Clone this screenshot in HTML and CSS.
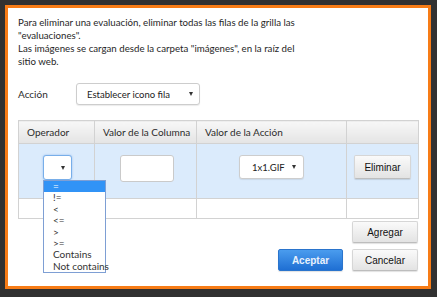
FILE: index.html
```html
<!DOCTYPE html>
<html lang="es">
<head>
    <meta charset="UTF-8">
    <title>Condiciones de fila</title>
    <link rel="stylesheet" href="styles.css">
</head>
<body>
    <div class="backdrop">
        <div class="dialog">
            <p class="note">Para eliminar una evaluación, eliminar todas las filas de la grilla las<br>"evaluaciones".<br>Las imágenes se cargan desde la carpeta "imágenes", en la raíz del<br>sitio web.</p>

            <div class="action-row">
                <span class="label">Acción</span>
                <div class="select select-action"><span>Establecer icono fila</span><i class="caret"></i></div>
            </div>

            <table class="grid">
                <colgroup>
                    <col class="col-op">
                    <col class="col-val">
                    <col class="col-act">
                    <col class="col-btn">
                </colgroup>
                <thead>
                    <tr>
                        <th>Operador</th>
                        <th>Valor de la Columna</th>
                        <th>Valor de la Acción</th>
                        <th></th>
                    </tr>
                </thead>
                <tbody>
                    <tr class="row-current">
                        <td>
                            <div class="dropdown">
                                <div class="select select-op focused"><i class="caret"></i></div>
                                <ul class="options">
                                    <li class="active">=</li>
                                    <li>!=</li>
                                    <li>&lt;</li>
                                    <li>&lt;=</li>
                                    <li>&gt;</li>
                                    <li>&gt;=</li>
                                    <li>Contains</li>
                                    <li>Not contains</li>
                                </ul>
                            </div>
                        </td>
                        <td><input class="value" type="text"></td>
                        <td><div class="select select-gif"><span>1x1.GIF</span><i class="caret"></i></div></td>
                        <td><button class="btn btn-delete">Eliminar</button></td>
                    </tr>
                    <tr class="row-empty">
                        <td></td><td></td><td></td><td></td>
                    </tr>
                </tbody>
            </table>

            <div class="add-row">
                <button class="btn">Agregar</button>
            </div>
            <div class="footer">
                <button class="btn btn-primary">Aceptar</button>
                <button class="btn">Cancelar</button>
            </div>
        </div>
    </div>
</body>
</html>
```

FILE: styles.css
```css
body {
    margin: 0;
    background: #313131;
    font-family: Lato, "Liberation Sans", sans-serif;
    color: #2b2b2b;
}
.backdrop {
    height: 297px;
    padding: 5px 0 0 5px;
    box-sizing: border-box;
}
.dialog {
    box-sizing: border-box;
    width: 426px;
    height: 284px;
    border: 3px solid #f77c16;
    background: #fff;
    padding: 8px 10px 0;
}
.note {
    margin: 0;
    font-size: 9.7px;
    line-height: 13px;
    color: #262626;
}
.action-row {
    display: flex;
    align-items: center;
    margin-top: 15px;
}
.label {
    width: 58px;
    font-size: 10px;
}
.select {
    box-sizing: border-box;
    display: flex;
    align-items: center;
    justify-content: space-between;
    background: #fff;
    border: 1px solid #cdcdcd;
    border-radius: 3px;
    box-shadow: 0 1px 1px rgba(0, 0, 0, 0.08);
    font-size: 9.5px;
    color: #222;
}
.caret {
    width: 0;
    height: 0;
    border-left: 2.5px solid transparent;
    border-right: 2.5px solid transparent;
    border-top: 4px solid #333;
}
.select-action {
    width: 124px;
    height: 22px;
    padding: 0 6px 0 10px;
}
.grid {
    margin-top: 15px;
    width: 400px;
    border-collapse: collapse;
    table-layout: fixed;
}
.col-op { width: 76px; }
.col-val { width: 102px; }
.col-act { width: 150px; }
.col-btn { width: 72px; }
.grid th,
.grid td {
    border: 1px solid #d2d2d2;
    padding: 0;
}
.grid th {
    height: 22px;
    background: linear-gradient(#f7f7f7, #e4e4e4);
    text-align: left;
    padding-left: 8px;
    font-size: 10px;
    font-weight: normal;
    color: #2b2b2b;
}
.row-current td {
    height: 43px;
    background: #dbebfc;
    text-align: center;
    vertical-align: top;
    padding-top: 11px;
}
.row-empty td {
    height: 19px;
}
.dropdown {
    position: relative;
    display: inline-block;
    vertical-align: top;
    margin-left: 2px;
}
.select-op {
    width: 29px;
    height: 25px;
    justify-content: flex-end;
    padding-right: 6px;
}
.focused {
    border-color: #78aee9;
    box-shadow: 0 0 2px rgba(90, 150, 230, 0.6);
}
.options {
    position: absolute;
    left: 0;
    top: 100%;
    margin: 0;
    padding: 0;
    list-style: none;
    width: 63px;
    box-sizing: border-box;
    border: 1px solid #7e9fd4;
    background: #fff;
    text-align: left;
    font-size: 10px;
    z-index: 2;
}
.options li {
    height: 11.4px;
    line-height: 11.4px;
    padding-left: 9px;
    color: #333;
    white-space: nowrap;
}
.options li.active {
    background: #3193f6;
    color: #fff;
}
.value {
    box-sizing: border-box;
    width: 54px;
    height: 27px;
    margin: 0 0 0 2px;
    vertical-align: top;
    border: 1px solid #cacaca;
    border-radius: 3px;
    background: #fff;
}
.select-gif {
    display: inline-flex;
    vertical-align: top;
    width: 65px;
    height: 24px;
    padding: 0 7px 0 12px;
}
.btn {
    box-sizing: border-box;
    height: 22px;
    width: 66px;
    padding: 0;
    border: 1px solid #d6d6d6;
    border-bottom-color: #bdbdbd;
    border-radius: 2px;
    background: linear-gradient(#fafafa, #e3e3e3);
    box-shadow: 0 1px 1px rgba(0, 0, 0, 0.12);
    font-family: "Liberation Sans", sans-serif;
    font-size: 10px;
    color: #111;
}
.btn-delete {
    width: 57px;
    height: 24px;
    vertical-align: top;
}
.btn-primary {
    width: 65px;
    border-color: #2a74cc;
    background: linear-gradient(#4a9cee, #1f6fd3);
    color: #e8f1fc;
    font-weight: bold;
}
.add-row {
    display: flex;
    justify-content: flex-end;
    width: 400px;
    margin-top: 2px;
}
.footer {
    display: flex;
    justify-content: flex-end;
    gap: 9px;
    width: 400px;
    margin-top: 6px;
}
```
